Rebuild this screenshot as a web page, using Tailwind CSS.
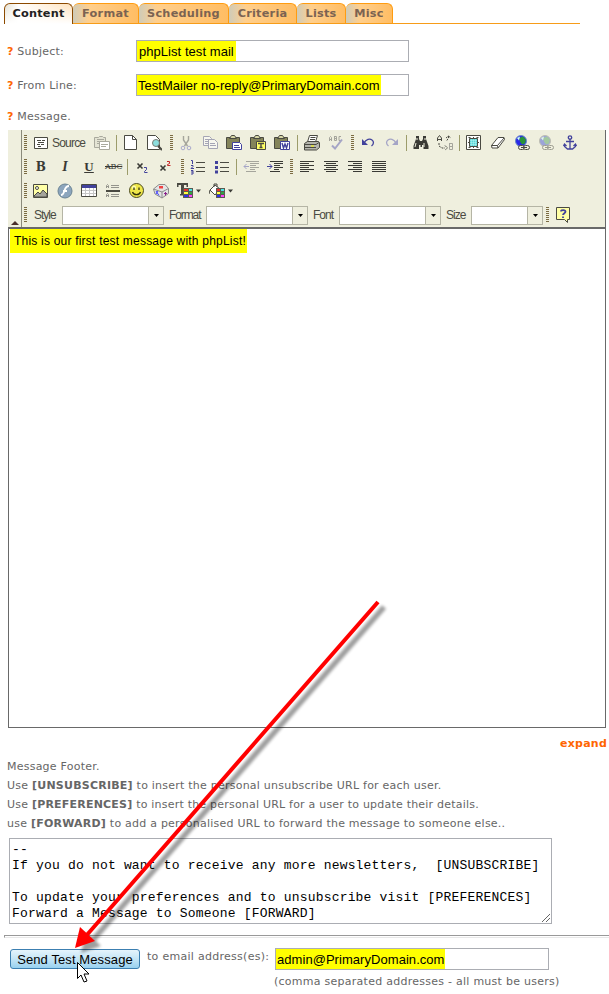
<!DOCTYPE html>
<html lang="en"><head><meta charset="utf-8"><title>Send a message</title>
<script src="https://cdn.jsdelivr.net/npm/@tailwindcss/browser@4"></script></head>
<body class="bg-white text-[11px] tracking-[0.23px] text-[#666] font-['DejaVu_Sans',sans-serif]">
<div class="w-[609px] h-[994px] relative overflow-hidden flex flex-col">

<nav class="flex ml-1 mt-[3px] h-[21px] w-[576px] border-b border-[#f79c18] font-bold leading-[20px] text-[#7b6352]">
<div class="w-[69px] h-[21px] shrink-0 rounded-t-[6px] border border-b-0 border-[#8c4a00] bg-gradient-to-r from-[#e4e0d2] via-white via-20% to-[#ffe3bd] text-[#222] text-center text-[11.3px]"><div class="h-5 bg-gradient-to-b from-transparent to-white">Content</div></div>
<div class="w-[66px] shrink-0 rounded-t-[6px] border-t border-r border-[#ff9c10] bg-gradient-to-r from-[#cfcbb8] via-[#ffcf8c] via-25% to-[#ffbd63] text-center text-[11.3px]">Format</div>
<div class="w-[90px] shrink-0 rounded-t-[6px] border-t border-r border-[#ff9c10] bg-gradient-to-r from-[#cfcbb8] via-[#ffcf8c] via-20% to-[#ffbd63] text-center text-[11.3px]">Scheduling</div>
<div class="w-[68px] shrink-0 rounded-t-[6px] border-t border-r border-[#ff9c10] bg-gradient-to-r from-[#cfcbb8] via-[#ffcf8c] via-25% to-[#ffbd63] text-center text-[11.3px]">Criteria</div>
<div class="w-[49px] shrink-0 rounded-t-[6px] border-t border-r border-[#ff9c10] bg-gradient-to-r from-[#cfcbb8] via-[#ffcf8c] via-30% to-[#ffbd63] text-center text-[11.3px]">Lists</div>
<div class="w-[47px] shrink-0 rounded-t-[6px] border-t border-r border-[#ff9c10] bg-gradient-to-r from-[#cfcbb8] via-[#ffcf8c] via-30% to-[#ffbd63] text-center text-[11.3px]">Misc</div>
</nav>

<div class="flex mt-4 ml-[7px] h-[22px]"><span class="w-[129px] shrink-0 whitespace-pre leading-6"><b class="text-[#ff6600]">?</b> Subject:</span><div class="w-[273px] border border-[#abadb3] text-black text-[13px] font-['Liberation_Sans',sans-serif] leading-[22px] flex"><span class="bg-[#ff0] pl-[2px] w-[99px] h-5 whitespace-nowrap tracking-[0.05px]">phpList test mail</span></div></div>
<div class="flex mt-3 ml-[7px] h-[22px]"><span class="w-[129px] shrink-0 whitespace-pre leading-6"><b class="text-[#ff6600]">?</b> From Line:</span><div class="w-[273px] border border-[#abadb3] text-black text-[13px] font-['Liberation_Sans',sans-serif] leading-[22px] flex"><span class="bg-[#ff0] pl-[1px] w-[244px] h-5 whitespace-nowrap tracking-[0.02px]">TestMailer no-reply@PrimaryDomain.com</span></div></div>
<div class="ml-[7px] mt-[9px] h-[22px] leading-6"><b class="text-[#ff6600]">?</b> Message.</div>

<section class="ml-2 mt-[3px] w-[598px] h-[598px] border-r border-[#696969] flex flex-col">
<div class="h-[97px] bg-[#efefde] flex">
<div class="w-[14px] border-r border-[#8b8b7b] flex items-end"><svg class="w-[13px] h-[6px]" viewBox="0 0 13 6"><path d="M3 4 L7 0 L11 4Z" fill="#4a302b"/></svg></div>
<div class="pl-[2px] flex flex-col text-[#4a4a42] font-['Liberation_Sans',sans-serif] text-[12px]">

<div id="row1" class="flex h-[25px] items-center [&>svg]:shrink-0">
<svg class="w-[3px] h-4" viewBox="0 0 3 16"><path d="M1.500 0V16" stroke="#7b6b42" stroke-width="3" stroke-dasharray="1 1"/></svg>
<svg class="w-4 h-4 ml-[6px]" viewBox="0 0 16 16" fill="none" stroke="#4a4a42"><path d="M1.500 2.500h13v11h-13z" fill="#fff"/><path d="M4 5.500h4M9 5.500h3M5 7.500h6M4 9.500h3M8 9.500h3M5 11.500h3"/></svg>
<span class="ml-[3px] w-[42px] tracking-[-0.8px]">Source</span>
<svg class="w-4 h-4" viewBox="0 0 16 16" fill="#fff" stroke="#a9a99d"><path d="M.5 2.500h4l1-1h3l1 1h2v10H.5z" fill="#e4e4d4"/><path d="M3 4.500h7M3 6.500h4M3 8.500h2" /><path d="M5.500 6.500h10v8h-10z"/><path d="M7 9.500h7M7 11.500h5"/></svg>
<i class="w-px h-4 bg-[#9c9c6b] ml-[6px] mr-[5px]"></i>
<svg class="w-4 h-4" viewBox="0 0 16 16" fill="#fff" stroke="#4a4a42"><path d="M2.500 .5h8l4 4v10h-12z"/><path d="M10.500 .5v4h4" fill="none"/></svg>
<svg class="w-4 h-4 ml-2" viewBox="0 0 16 16" fill="#fff" stroke="#4a4a42"><path d="M1.500 .5h8l4 4v10h-12z"/><circle cx="10" cy="8" r="3.500" fill="#8cdede" stroke="#7b7b73"/><path d="M12 11l4 4" stroke-width="2"/></svg>
<svg class="w-[3px] h-4 ml-2" viewBox="0 0 3 16"><path d="M1.500 0V16" stroke="#7b6b42" stroke-width="3" stroke-dasharray="1 1"/></svg>
<svg class="w-4 h-4 ml-[5px]" viewBox="0 0 16 16" fill="none" stroke="#a5a59c"><path d="M5.500 1v4l4 6M10.500 1v4l-4 6" stroke-width="1.400"/><circle cx="5" cy="13" r="1.800" stroke="#a9a9cc"/><circle cx="11" cy="13" r="1.800" stroke="#a9a9cc"/></svg>
<svg class="w-4 h-4 ml-2" viewBox="0 0 16 16" fill="#f7f7ef" stroke="#a5a5b5"><path d="M1.500 1.500h6l2 2v7h-8z"/><path d="M3 4.500h4M3 6.500h5M3 8.500h4"/><path d="M6.500 4.500h6l3 3v6h-9z"/><path d="M8 8.500h5M8 10.500h6"/></svg>
<svg class="w-4 h-4 ml-2" viewBox="0 0 16 16" stroke="#4a4a42" fill="#84845a"><path d="M.5 2.500h13v11H.5z"/><path d="M3.500 3.500l2-3h3l2 3z" fill="#d6d6a5"/><path d="M6.500 7.500h7l2 2v5h-9z" fill="#fff" stroke="#42429c"/><path d="M8 10.500h5M8 12.500h6" stroke="#42429c"/></svg>
<svg class="w-4 h-4 ml-2" viewBox="0 0 16 16" stroke="#4a4a42" fill="#84845a"><path d="M.5 2.500h13v11H.5z"/><path d="M3.500 3.500l2-3h3l2 3z" fill="#d6d6a5"/><path d="M6.500 6.500h9v8h-9z" fill="#ffff63"/><path d="M8 8.500h6M11 8v5M9.500 12.500h3" stroke-width="1.400"/></svg>
<svg class="w-4 h-4 ml-2" viewBox="0 0 16 16" stroke="#4a4a42" fill="#84845a"><path d="M.5 2.500h13v11H.5z"/><path d="M3.500 3.500l2-3h3l2 3z" fill="#d6d6a5"/><path d="M6.500 6.500h9v8h-9z" fill="#fff" stroke="#42429c"/><path d="M8 8l1.500 5L11 9l1.500 4L14 8" fill="none" stroke="#42429c" stroke-width="1.400"/></svg>
<i class="w-px h-4 bg-[#9c9c6b] ml-[7px] mr-[6px]"></i>
<svg class="w-4 h-4" viewBox="0 0 16 16" stroke="#4a4a42" fill="#fff"><path d="M3.500 7l2-6.500h8l-2 6.500"/><path d="M6.500 2.500h5M6 4.500h5"/><path d="M.5 8.500l3-2h11l1 1v5l-3 2.500h-12z" fill="#b5b5ad"/><path d="M1 9.500h11l3-2M1 12.500h11" fill="none"/><path d="M7 11h3" stroke="#ff0"/></svg>
<svg class="w-4 h-4 ml-2" viewBox="0 0 16 16" fill="none" stroke="#a5a59c"><path d="M1.500 6V2.500l1-1 1 1V6M1.500 4.500h2M6.500 1v4.500h2v-4h-2M6.500 3.500h2M13 1.500h-2v4h2"/><path d="M4 10.500l3 3 7-9" stroke="#a5a5c6" stroke-width="2"/></svg>
<svg class="w-[3px] h-4 ml-[7px]" viewBox="0 0 3 16"><path d="M1.500 0V16" stroke="#7b6b42" stroke-width="3" stroke-dasharray="1 1"/></svg>
<svg class="w-4 h-4 ml-[6px]" viewBox="0 0 16 16" fill="none" stroke="#42429c" stroke-width="1.300"><path d="M4 8c2-4 6-4.500 8-3 2 1.500 2 4-.5 6"/><path d="M2 4v6h6z" fill="#42429c" stroke="none"/></svg>
<svg class="w-4 h-4 ml-2" viewBox="0 0 16 16" fill="none" stroke="#a5a5c6" stroke-width="1.300"><path d="M12 8C10 4 6 3.500 4 5c-2 1.500-2 4 .5 6"/><path d="M14 4v6H8z" fill="#a5a5c6" stroke="none"/></svg>
<i class="w-px h-4 bg-[#9c9c6b] ml-[6px] mr-[6px]"></i>
<svg class="w-4 h-4" viewBox="0 0 16 16" fill="#3a3a35"><path d="M3 1h3v3l1 2h2l1-2V1h3v3l2.500 7v3h-5v-4h-1.500v2h-1.500v-2H6v4H.5v-3L3 4z"/><path d="M4 3v2M3 8l-1 4M12 3v2M11 8v4" stroke="#efefde"/></svg>
<svg class="w-4 h-4 ml-2" viewBox="0 0 16 16" fill="none" stroke="#4a4a42"><path d="M.5 6V3l2-2.500L4.500 3v3M.5 4.500h4"/><path d="M11.500 1v2l-2 3M9 3l2.500-2L14 3" stroke-dasharray="2 1"/><path d="M2 8v3l3 2h3M8 10.500l2.500 2.500L8 15" stroke-dasharray="2 1"/><path d="M12.500 8v6.500h3v-6h-3M12.500 11.500h3" stroke="#a5a59c"/></svg>
<i class="w-px h-4 bg-[#9c9c6b] ml-[6px] mr-[6px]"></i>
<svg class="w-4 h-4" viewBox="0 0 16 16" stroke="#4a4a42" fill="#fff"><path d="M.5 .5h14v14H.5z"/><path d="M3.500 3.500h8v8h-8z" fill="#5ad6d6"/><path d="M4 5.500h7M4 7.500h7M4 9.500h7M5.500 4v7M7.500 4v7M9.500 4v7" stroke="#b5f7f7" stroke-width=".5"/><path d="M2.500 2.500h2M7 2.500h1M10.500 2.500h2M2.500 12.500h2M7 12.500h1M10.500 12.500h2M2.500 7v1M12.500 7v1"/></svg>
<svg class="w-4 h-4 ml-2" viewBox="0 0 16 16" stroke="#4a4a42" fill="#fff"><path d="M1.500 10.500L8 2.500h6l.5 2-6.500 8.500h-6z"/><path d="M1.500 10.500h6L14 3M7.500 10.500l.5 2.500" fill="none"/></svg>
<svg class="w-4 h-4 ml-2" viewBox="0 0 16 16"><circle cx="7" cy="6" r="5.500" fill="#2929e7" stroke="#6b8cc6"/><path d="M5 3l4-1.500 3 3-1 4-3 1-2-3z" fill="#29943a"/><path d="M3 3l3-1.500-1 4z" fill="#d6ffff"/><g fill="#efefde" stroke="#4a4a42"><rect x="4.500" y="10.500" width="6" height="4" rx="2"/><rect x="9.500" y="10.500" width="6" height="4" rx="2"/><path d="M7 12.500h6"/></g></svg>
<svg class="w-4 h-4 ml-2 opacity-50" viewBox="0 0 16 16"><circle cx="7" cy="6" r="5.500" fill="#4a5ad6" stroke="#8c8c84"/><path d="M5 3l4-1.500 3 3-1 4-3 1-2-3z" fill="#5aa563"/><path d="M3 3l3-1.500-1 4z" fill="#d6ffff"/><g fill="#efefde" stroke="#4a4a42"><rect x="4.500" y="10.500" width="6" height="4" rx="2"/><rect x="9.500" y="10.500" width="6" height="4" rx="2"/><path d="M7 12.500h6"/></g></svg>
<svg class="w-4 h-4 ml-2" viewBox="0 0 16 16" fill="none" stroke="#42429c" stroke-width="1.300"><circle cx="8" cy="2.500" r="1.700"/><path d="M8 4v10.500M4 6.500h8M2.500 9v2.500l3 2.500h5l3-2.500V9M1.500 11l1-2 2 2M11.500 11l2-2 1 2"/></svg>
</div>

<div id="row2" class="flex h-6 items-center [&>svg]:shrink-0">
<svg class="w-[3px] h-4" viewBox="0 0 3 16"><path d="M1.500 0V16" stroke="#7b6b42" stroke-width="3" stroke-dasharray="1 1"/></svg>
<b class="w-4 ml-[6px] text-center text-[12px] leading-4 text-[#3a3a35] font-['DejaVu_Serif',serif]">B</b>
<b class="w-4 ml-2 text-center text-[14px] leading-4 italic text-[#3a3a35] font-['Liberation_Serif',serif]">I</b>
<b class="w-4 ml-2 text-center text-[13px] leading-4 underline text-[#3a3a35] font-['Liberation_Serif',serif]">U</b>
<span class="w-4 ml-2 text-center text-[8px] leading-4 tracking-[-0.2px] line-through text-[#3a3a35] font-['DejaVu_Serif',serif]">ABC</span>
<i class="w-px h-4 bg-[#9c9c6b] ml-[6px] mr-[6px]"></i>
<svg class="w-4 h-4" viewBox="0 0 16 16" fill="none"><path d="M3.500 4.500l5 5M8.500 4.500l-5 5" stroke="#3a3a35" stroke-width="1.600"/><path d="M10 8.500h2.500v2l-2 2v1h3" stroke="#42429c"/></svg>
<svg class="w-4 h-4 ml-2" viewBox="0 0 16 16" fill="none"><path d="M2.500 6.500l5 5M7.500 6.500l-5 5" stroke="#3a3a35" stroke-width="1.600"/><path d="M9 2.500h2.500v2l-2 1v1h3" stroke="#c62929"/></svg>
<svg class="w-[3px] h-4 ml-[7px]" viewBox="0 0 3 16"><path d="M1.500 0V16" stroke="#7b6b42" stroke-width="3" stroke-dasharray="1 1"/></svg>
<svg class="w-4 h-4 ml-[6px]" viewBox="0 0 16 16" fill="none" stroke="#4a4a42"><path d="M6 3.500h9M6 8.500h9M6 12.500h9"/><path d="M1 1.500h1.500V5M1 6.500h2v1l-2 2h3M1 11.500h2v3.500H1M1 13h2" stroke="#42429c"/></svg>
<svg class="w-4 h-4 ml-2" viewBox="0 0 16 16" stroke="#4a4a42"><path d="M6 3.500h9M6 8.500h9M6 12.500h9"/><path d="M1 2h3v3H1zM1 7h3v3H1zM1 11.500h3v3H1z" fill="#42429c" stroke="none"/></svg>
<i class="w-px h-4 bg-[#9c9c6b] ml-[6px] mr-[6px]"></i>
<svg class="w-4 h-4" viewBox="0 0 16 16" stroke="#a5a59c"><path d="M3 2.500h13M7 4.500h9M7 6.500h6M7 8.500h9M7 10.500h5M3 12.500h10"/><path d="M1 7.500h5M3.500 5L1 7.500 3.500 10" stroke="#a5a5c6" fill="none"/></svg>
<svg class="w-4 h-4 ml-2" viewBox="0 0 16 16" stroke="#3a3a35"><path d="M3 2.500h13M7 4.500h9M7 6.500h6M7 8.500h9M7 10.500h5M3 12.500h10"/><path d="M0 7.500h5M2.500 5L5 7.500 2.500 10" stroke="#42429c" fill="none"/></svg>
<svg class="w-[3px] h-4 ml-[7px]" viewBox="0 0 3 16"><path d="M1.500 0V16" stroke="#7b6b42" stroke-width="3" stroke-dasharray="1 1"/></svg>
<svg class="w-4 h-4 ml-[6px]" viewBox="0 0 16 16" stroke="#3a3a35"><path d="M1 2.500h14M1 4.500h9M1 6.500h14M1 8.500h9M1 10.500h14M1 12.500h9"/></svg>
<svg class="w-4 h-4 ml-2" viewBox="0 0 16 16" stroke="#3a3a35"><path d="M1 2.500h14M3 4.500h10M1 6.500h14M3 8.500h10M1 10.500h14M3 12.500h10"/></svg>
<svg class="w-4 h-4 ml-2" viewBox="0 0 16 16" stroke="#3a3a35"><path d="M1 2.500h14M6 4.500h9M1 6.500h14M6 8.500h9M1 10.500h14M6 12.500h9"/></svg>
<svg class="w-4 h-4 ml-2" viewBox="0 0 16 16" stroke="#3a3a35"><path d="M1 2.500h14M1 4.500h14M1 6.500h14M1 8.500h14M1 10.500h14M1 12.500h14"/></svg>
</div>

<div id="row3" class="flex h-6 items-center [&>svg]:shrink-0">
<svg class="w-[3px] h-4" viewBox="0 0 3 16"><path d="M1.500 0V16" stroke="#7b6b42" stroke-width="3" stroke-dasharray="1 1"/></svg>
<svg class="w-4 h-4 ml-[6px]" viewBox="0 0 16 16" stroke="#4a4a42"><path d="M.5 1.500h14v13H.5z" fill="#ffffa5"/><path d="M1 13l4-4 2 2 3-4 4 4v3H1z" fill="#a5a59c"/><circle cx="4" cy="5" r="1.500" fill="#fff"/></svg>
<svg class="w-4 h-4 ml-2" viewBox="0 0 16 16"><circle cx="8" cy="8" r="7" fill="#8ca5bd" stroke="#6b8494"/><path d="M12 3c-4 0-4 4-5 6-1 3-2 3-3 3M6 8h4" fill="none" stroke="#fff" stroke-width="1.800"/></svg>
<svg class="w-4 h-4 ml-2" viewBox="0 0 16 16" stroke="#4a4a42" fill="#fff"><path d="M.5 1.500h15v12H.5z"/><path d="M1 2h14v3H1z" fill="#42429c" stroke="none"/><path d="M1 7.500h14M1 10.500h14M4.500 5v8M8.500 5v8M12.500 5v8" stroke="#c6c6c6"/></svg>
<svg class="w-4 h-4 ml-2" viewBox="0 0 16 16" fill="none" stroke="#94948c"><path d="M1.500 5V2.500l1-1 1 1V5M1.500 3.500h2M6 2.500h8M6 4.500h8M1.500 14v-2.500l1-1 1 1V14M1.500 12.500h2M6 11.500h8M6 13.500h8"/><path d="M1 8h14" stroke="#4a4a42" stroke-width="2"/></svg>
<svg class="w-4 h-4 ml-2" viewBox="0 0 16 16"><circle cx="7.500" cy="7.500" r="7" fill="#efe74a" stroke="#4a4a21"/><circle cx="5" cy="4.500" r="2" fill="#ffffb5"/><path d="M5 4.500v2.500M10 4.500v2.500M3.500 9c1 3.500 7 3.500 8 0" fill="none" stroke="#31310a" stroke-width="1.300"/></svg>
<svg class="w-4 h-4 ml-2" viewBox="0 0 16 16" stroke="#8c8c8c"><path d="M.5 6L6 1.500h6l3.500 4v5L9 15l-7-4z" fill="#e4e4e4"/><path d="M.5 6L9 9l6.500-3.500M9 9v6" fill="none"/><path d="M6 3h4v2.500H6z" fill="#ef4242" stroke="none"/><path d="M3 8l3 4.500M5 8l-2 3" stroke="#4242ff"/><path d="M11 10.500h3M12.500 9v3.500" stroke="#8c218c"/></svg>
<svg class="w-6 h-4 ml-2" viewBox="0 0 24 16"><path d="M0 0h11v4H9.500V2H7v9h2v1.500H3V11h1V2H1.500v2H0z" fill="#4a4a42"/><path d="M6 5h10v10H6z" fill="#5a5a52"/><path d="M7 6h4v2H7z" fill="#e73131"/><path d="M12 6h3v2h-3z" fill="#4ae7e7"/><path d="M7 9h4v2H7z" fill="#ffff42"/><path d="M12 9h3v2h-3z" fill="#31a542"/><path d="M7 12h4v2H7z" fill="#3131e7"/><path d="M12 12h3v2h-3z" fill="#ff42ff"/><path d="M19 6.500h5L21.500 9.500z" fill="#3a3a35"/></svg>
<svg class="w-[25px] h-4 ml-2" viewBox="0 0 25 16"><path d="M1 7l5-5 5 4-5 6z" fill="#fff" stroke="#4a4a42"/><path d="M5 4V1h3v3M1 7l-1 4" stroke="#4a4a42" fill="none"/><path d="M7 5h9v10H7z" fill="#5a5a52"/><path d="M8 6h3v2H8z" fill="#e73131"/><path d="M12 6h3v2h-3z" fill="#4ae7e7"/><path d="M8 9h3v2H8z" fill="#ffff42"/><path d="M12 9h3v2h-3z" fill="#31a542"/><path d="M8 12h3v2H8z" fill="#3131e7"/><path d="M12 12h3v2h-3z" fill="#ff42ff"/><path d="M19 6.500h5L21.500 9.500z" fill="#3a3a35"/></svg>
</div>

<div id="row4" class="flex h-6 items-center [&>svg]:shrink-0">
<svg class="w-[3px] h-4" viewBox="0 0 3 16"><path d="M1.500 0V16" stroke="#7b6b42" stroke-width="3" stroke-dasharray="1 1"/></svg>
<span class="w-[28px] ml-[7px] tracking-[-1px]">Style</span>
<div class="w-[102px] h-[19px] border border-[#b5b5a5] bg-white flex justify-end"><div class="w-[15px] border-l border-[#b5b5a5] bg-[#efefde] flex items-center justify-center"><svg class="w-[5px] h-[3px]" viewBox="0 0 5 3"><path d="M0 0h5L2.500 3z"/></svg></div></div>
<span class="w-[37px] ml-[5px] tracking-[-1.1px]">Format</span>
<div class="w-[102px] h-[19px] border border-[#b5b5a5] bg-white flex justify-end"><div class="w-[15px] border-l border-[#b5b5a5] bg-[#efefde] flex items-center justify-center"><svg class="w-[5px] h-[3px]" viewBox="0 0 5 3"><path d="M0 0h5L2.500 3z"/></svg></div></div>
<span class="w-[26px] ml-[5px] tracking-[-1px]">Font</span>
<div class="w-[102px] h-[19px] border border-[#b5b5a5] bg-white flex justify-end"><div class="w-[15px] border-l border-[#b5b5a5] bg-[#efefde] flex items-center justify-center"><svg class="w-[5px] h-[3px]" viewBox="0 0 5 3"><path d="M0 0h5L2.500 3z"/></svg></div></div>
<span class="w-[25px] ml-[5px] tracking-[-1px]">Size</span>
<div class="w-[72px] h-[19px] border border-[#b5b5a5] bg-white flex justify-end"><div class="w-[15px] border-l border-[#b5b5a5] bg-[#efefde] flex items-center justify-center"><svg class="w-[5px] h-[3px]" viewBox="0 0 5 3"><path d="M0 0h5L2.500 3z"/></svg></div></div>
<svg class="w-[3px] h-4 ml-[3px]" viewBox="0 0 3 16"><path d="M1.500 0V16" stroke="#7b6b42" stroke-width="3" stroke-dasharray="1 1"/></svg>
<svg class="w-4 h-4 ml-[6px]" viewBox="0 0 16 16" stroke="#4a4a42"><path d="M1.500 .5h13v12h-2v3l-3-3h-8z" fill="#ffffa5"/><path d="M6 4.500c0-2 4.500-2 4.500.3C10.500 6 8 6.500 8 8M8 9.500v1.500" fill="none" stroke="#42429c" stroke-width="1.800"/></svg>
</div>
</div></div>
<div class="flex-1 border-t-2 border-l border-b border-[#696969] bg-white">
<span class="block bg-[#ff0] w-[237px] h-[24px] ml-px pl-1 leading-[25px] text-black text-[12px] tracking-[0.21px] whitespace-nowrap font-['Liberation_Sans',sans-serif]">This is our first test message with phpList!</span>
</div>
</section>

<div class="h-[29px] leading-8 pr-[2px] text-right text-[#ff6600] font-bold">expand</div>
<div class="ml-[7px] leading-[19px] whitespace-nowrap">
<p>Message Footer.</p>
<p>Use <b>[UNSUBSCRIBE]</b> to insert the personal unsubscribe URL for each user.</p>
<p class="tracking-[0.21px]">Use <b>[PREFERENCES]</b> to insert the personal URL for a user to update their details.</p>
<p>use <b>[FORWARD]</b> to add a personalised URL to forward the message to someone else..</p>
</div>
<div class="relative ml-[9px] mt-[5px] w-[543px] h-[86px] shrink-0 border border-[#abadb3] pl-[2px] pt-[3px] text-black text-[13px] leading-4 whitespace-pre tracking-[0.19px] font-['Liberation_Mono',monospace]">--
If you do not want to receive any more newsletters,  [UNSUBSCRIBE]

To update your preferences and to unsubscribe visit [PREFERENCES]
Forward a Message to Someone [FORWARD]<svg class="absolute right-px bottom-px w-2 h-2" viewBox="0 0 8 8" stroke="#666"><path d="M0 8L8 0M4 8l4-4"/></svg></div>
<div class="ml-1 mt-[11px] h-[3px] shrink-0 border-t border-l border-b border-[#999] border-b-[#e8e8e8]"></div>
<div class="flex mt-[10px] ml-[10px] items-start">
<button class="mt-[1px] w-[130px] h-5 shrink-0 rounded-[3px] border border-[#3c7fb1] bg-gradient-to-b from-[#e5f4fc] via-[#c4e5f6] to-[#98d1ef] text-black text-[13px] tracking-[0.1px] leading-[19px] whitespace-nowrap font-['Liberation_Sans',sans-serif]">Send Test Message</button>
<span class="ml-[7px] w-[128px] leading-[17px] tracking-[0.28px] whitespace-nowrap">to email address(es):</span>
<div><div class="w-[274px] h-[22px] border border-[#abadb3] text-black text-[13px] font-['Liberation_Sans',sans-serif] leading-[22px] flex"><span class="bg-[#ff0] pl-[1px] w-[169px] h-5 whitespace-nowrap tracking-[0.05px]">admin@PrimaryDomain.com</span></div>
<p class="-ml-px mt-[3px] leading-[18px] tracking-[0.26px] whitespace-nowrap">(comma separated addresses - all must be users)</p></div>
</div>

<svg class="absolute left-0 top-0 w-[609px] h-[994px] pointer-events-none" viewBox="0 0 609 994">
<defs><filter id="soft" x="-10%" y="-10%" width="120%" height="120%"><feGaussianBlur stdDeviation="1.500"/></filter></defs>
<g transform="translate(6 5)" filter="url(#soft)" opacity=".38"><path d="M378 602L86 936" stroke="#000" stroke-width="5.500"/><path d="M75 948l5-21 15 14z"/></g>
<path d="M378 602L86 936" stroke="#f00" stroke-width="4"/><path d="M75 948l5-21 15 14z" fill="#f00"/>
<path d="M77.500 962.500v16l3.500-3.500 3 7 3-1-3-7h5z" fill="#fff" stroke="#000"/>
</svg>
</div></body></html>
